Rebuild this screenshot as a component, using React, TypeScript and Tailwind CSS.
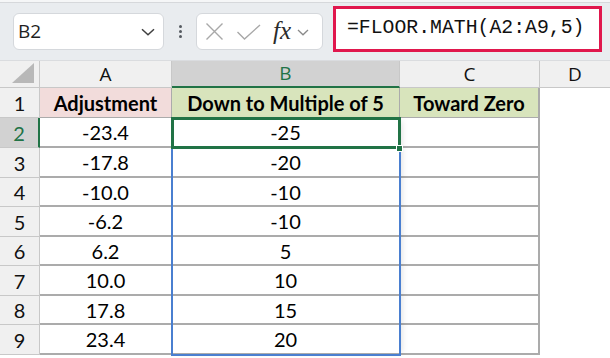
import React from "react";

const rowHeights = [30, 30, 30, 29, 30, 29, 30, 29, 30];
const dataA = ["-23.4", "-17.8", "-10.0", "-6.2", "6.2", "10.0", "17.8", "23.4"];
const dataB = ["-25", "-20", "-10", "-10", "5", "10", "15", "20"];

const cellFont = { fontFamily: "Lato, 'Open Sans', sans-serif" };

function Chevron() {
  return (
    <svg width="14" height="8" viewBox="0 0 14 8">
      <path d="M1 1.2 L7 6.8 L13 1.2" fill="none" stroke="#3f3f3f" strokeWidth="1.5" />
    </svg>
  );
}

export default function App() {
  return (
    <div className="w-[610px] h-[358px] overflow-hidden bg-white relative" style={{ fontFamily: "'Open Sans', sans-serif" }}>
      {/* toolbar */}
      <div className="h-[61px] bg-[#e9ecef] relative border-b border-[#dadcdf]">
        <div className="h-[3px] bg-[#f5f6f7] border-b border-[#d6d8db]" />
        <div className="flex items-start">
          {/* name box */}
          <div className="ml-[13px] mt-[10px] w-[151px] h-[37px] bg-white border border-[#d5d8dc] rounded-[6px] flex items-center justify-between pl-[4px] pr-[8px]">
            <span className="text-[19px] text-[#1f1f1f]">B2</span>
            <Chevron />
          </div>
          {/* dots */}
          <div className="w-[32px] h-[37px] mt-[10px] flex flex-col items-center justify-center gap-[2px]">
            <div className="w-[3px] h-[3px] rounded-full bg-[#555a60]" />
            <div className="w-[3px] h-[3px] rounded-full bg-[#555a60]" />
            <div className="w-[3px] h-[3px] rounded-full bg-[#555a60]" />
          </div>
          {/* formula buttons */}
          <div className="mt-[10px] w-[127px] h-[37px] bg-white border border-[#d5d8dc] rounded-[6px] flex items-center pl-[8px]">
            <svg width="19" height="19" viewBox="0 0 19 19">
              <path d="M1.5 1.5 L17.5 17.5 M17.5 1.5 L1.5 17.5" stroke="#a8a8a8" strokeWidth="1.4" fill="none" />
            </svg>
            <svg width="26" height="18" viewBox="0 0 26 18" className="ml-[12px]">
              <path d="M1.5 9 L8.5 16 L24 2" stroke="#a8a8a8" strokeWidth="1.4" fill="none" />
            </svg>
            <span className="ml-[11px] text-[25px] italic text-[#2b2b2b] leading-none pb-[2px]" style={{ fontFamily: "'Liberation Serif', serif" }}>
              fx
            </span>
            <span className="ml-[6px] mt-[2px]">
              <svg width="12" height="7" viewBox="0 0 12 7">
                <path d="M1 1 L6 5.8 L11 1" fill="none" stroke="#8a8a8a" strokeWidth="1.3" />
              </svg>
            </span>
          </div>
          {/* formula */}
          <div className="ml-[10px] mt-[3px] w-[269px] h-[46px] border-[3px] border-[#e0174d] bg-white flex items-center pl-[11px]">
            <span className="text-[19.8px] text-[#111]" style={{ fontFamily: "'Liberation Mono', monospace" }}>
              =FLOOR.MATH(A2:A9,5)
            </span>
          </div>
        </div>
      </div>

      {/* grid */}
      <div className="relative">
        <div
          className="grid"
          style={{
            gridTemplateColumns: "40px 132px 228px 140px 70px",
            gridTemplateRows: `27px ${rowHeights.map((h) => h + "px").join(" ")}`,
          }}
        >
          {/* column headers */}
          <div className="bg-[#f0f0f0] border-r border-b border-[#c8c8c8] relative">
            <svg width="22" height="20" viewBox="0 0 22 20" className="absolute right-[5px] bottom-[4px]">
              <path d="M22 0 L22 20 L0 20 Z" fill="#b8b8b8" />
            </svg>
          </div>
          <div className="bg-[#f0f0f0] border-r border-b border-[#c8c8c8] flex items-center justify-center text-[19px] text-[#111]">A</div>
          <div className="bg-[#d2d2d2] border-r border-b-[2px] border-b-[#217346] border-r-[#c8c8c8] flex items-center justify-center text-[19px] text-[#217346]">B</div>
          <div className="bg-[#f0f0f0] border-r border-b border-[#c8c8c8] flex items-center justify-center text-[19px] text-[#111]">C</div>
          <div className="bg-[#f0f0f0] border-b border-[#c8c8c8] flex items-center justify-center text-[19px] text-[#111]">D</div>

          {/* row 1 */}
          <div className="bg-[#f0f0f0] border-r border-b border-[#c8c8c8] flex items-center justify-center text-[20px] text-[#111]" style={cellFont}>1</div>
          <div className="bg-[#f2dcdb] border-r border-b border-[#ababab] flex items-center justify-center text-[20px] font-bold text-black" style={cellFont}>Adjustment</div>
          <div className="bg-[#d8e4bc] border-r border-b border-[#ababab] flex items-center justify-center text-[20px] font-bold text-black" style={cellFont}>Down to Multiple of 5</div>
          <div className="bg-[#d8e4bc] border-r-[2px] border-b border-[#ababab] flex items-center justify-center text-[20px] font-bold text-black" style={cellFont}>Toward Zero</div>
          <div className="bg-white" />

          {dataA.map((a, i) => (
            <React.Fragment key={i}>
              <div
                className={
                  i === 0
                    ? "bg-[#d2d2d2] border-r-[2px] border-r-[#217346] border-b border-b-[#c8c8c8] flex items-center justify-center text-[20px] text-[#217346]"
                    : "bg-[#f0f0f0] border-r border-b border-[#c8c8c8] flex items-center justify-center text-[20px] text-[#111]"
                }
                style={cellFont}
              >
                {i + 2}
              </div>
              <div className="border-r border-b-[2px] border-[#ababab] flex items-center justify-center text-[20px] text-black" style={cellFont}>{a}</div>
              <div className="border-r border-b-[2px] border-[#ababab] flex items-center justify-center text-[20px] text-black" style={cellFont}>{dataB[i]}</div>
              <div className="border-r-[2px] border-b-[2px] border-[#ababab] flex items-center justify-center" />
              <div className="bg-white" />
            </React.Fragment>
          ))}
        </div>

        {/* blue range border */}
        <div className="absolute left-[171px] top-[57px] w-[230px] h-[238px] border-[2px] border-[#4a7fd0] pointer-events-none" style={{ boxShadow: "4px 0 6px -3px rgba(0,0,0,0.12)" }} />
        {/* active cell */}
        <div className="absolute left-[171px] top-[56px] w-[230px] h-[32px] border-[3px] border-[#217346] pointer-events-none" />
        <div className="absolute left-[396px] top-[84px] w-[7px] h-[7px] bg-[#217346] border border-white pointer-events-none" />
      </div>
    </div>
  );
}
